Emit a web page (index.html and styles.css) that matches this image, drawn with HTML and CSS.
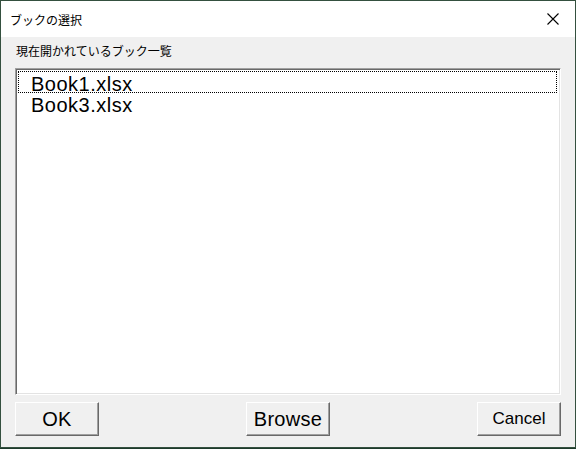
FILE: index.html
```html
<!DOCTYPE html>
<html lang="ja">
<head>
<meta charset="utf-8">
<title>ブックの選択</title>
<link rel="stylesheet" href="styles.css">
</head>
<body>
<div class="window">
  <div class="titlebar">
    <span class="title">ブックの選択</span>
    <span class="close" aria-label="閉じる">
      <svg width="12" height="12" viewBox="0 0 12 12"><path d="M0.5 0.5 L11.5 11.5 M11.5 0.5 L0.5 11.5" stroke="#000" stroke-width="1.1" fill="none"/></svg>
    </span>
  </div>
  <div class="content">
    <div class="label">現在開かれているブック一覧</div>
    <div class="listbox">
      <div class="item focused">Book1.xlsx</div>
      <div class="item">Book3.xlsx</div>
    </div>
    <div class="buttons">
      <button class="btn">OK</button>
      <button class="btn">Browse</button>
      <button class="btn cancel">Cancel</button>
    </div>
  </div>
</div>
</body>
</html>
```
FILE: styles.css
```css
* { box-sizing: border-box; }
html, body { margin: 0; padding: 0; }
body {
  width: 576px;
  height: 449px;
  background: #1d3a2b;
  overflow: hidden;
}
.window {
  width: 576px;
  height: 448px;
  border: 1px solid #34503f;
  display: flex;
  flex-direction: column;
  background: #f0f0f0;
}
.titlebar {
  height: 36px;
  background: #ffffff;
  display: flex;
  align-items: center;
  justify-content: space-between;
  padding: 0 16px 0 9px;
  font-family: "Noto Sans CJK JP", sans-serif;
  font-size: 12px;
  color: #000;
}
.close { display: flex; align-items: center; }
.close svg { display: block; }
.content {
  flex: 1;
  display: flex;
  flex-direction: column;
  padding: 6px 14px 0 14px;
}
.label {
  font-family: "Noto Sans CJK JP", sans-serif;
  font-size: 12px;
  line-height: 16px;
  height: 16px;
  margin-left: 1px;
  color: #000;
}
.listbox {
  margin-top: 9px;
  height: 327px;
  background: #fff;
  border-top: 1px solid #a0a0a0;
  border-left: 1px solid #a0a0a0;
  border-right: 1px solid #ffffff;
  border-bottom: 1px solid #ffffff;
  box-shadow: inset 1px 1px 0 #696969, inset -1px -1px 0 #e3e3e3;
  padding: 2px 3px 2px 2px;
}
.item {
  height: 22px;
  padding-top: 2px;
  line-height: 20px;
  padding-left: 12px;
  font-family: "Liberation Sans", Arial, sans-serif;
  font-size: 20px;
  letter-spacing: 0.5px;
  color: #000;
  border: 1px solid transparent;
}
.item + .item { margin-top: -1px; }
.item.focused { border: 1px dotted #000; }
.buttons {
  margin-top: 7px;
  display: flex;
  justify-content: space-between;
}
.btn {
  width: 84px;
  height: 34px;
  margin: 0;
  padding: 0;
  background: #f0f0f0;
  border-top: 1px solid #ffffff;
  border-left: 1px solid #ffffff;
  border-right: 1px solid #696969;
  border-bottom: 1px solid #696969;
  box-shadow: inset -1px -1px 0 #a0a0a0;
  font-family: "Liberation Sans", Arial, sans-serif;
  font-size: 20px;
  letter-spacing: 0.3px;
  color: #000;
}
.btn.cancel {
  font-size: 17px;
  letter-spacing: 0;
}
```
